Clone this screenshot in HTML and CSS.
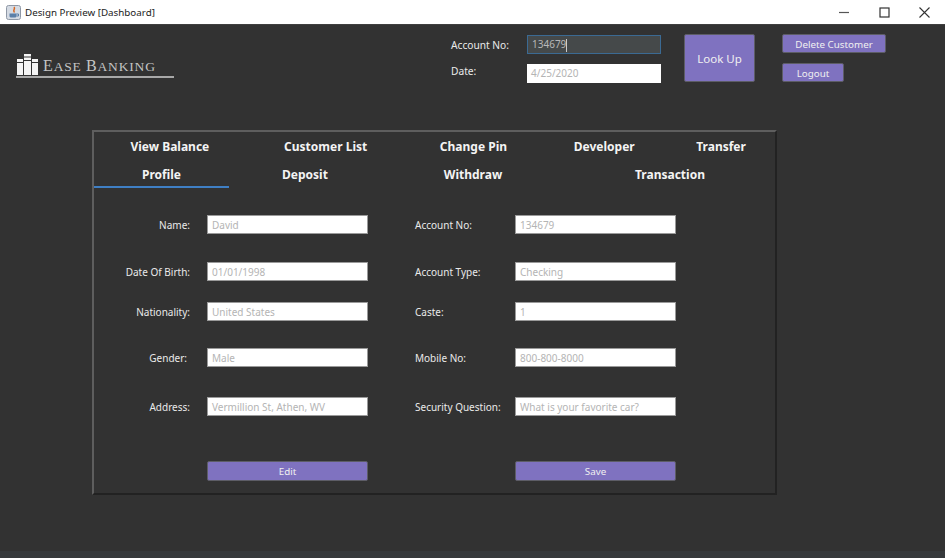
FILE: index.html
```html
<!DOCTYPE html>
<html lang="en">
<head>
  <meta charset="UTF-8" />
  <meta name="viewport" content="width=device-width, initial-scale=1.0"/>
  <title>Design Preview [Dashboard]</title>
  <link rel="stylesheet" href="styles.css">
</head>
<body>
<div class="titlebar">
  <svg class="app-icon" width="15" height="15" viewBox="0 0 15 15">
    <rect x="0.5" y="0.5" width="14" height="14" rx="2" fill="#d5dbe4" stroke="#8f98a6"/>
    <path d="M8 2 C10 4 6 5 8.500 7.500" fill="none" stroke="#d8651f" stroke-width="1.500"/>
    <path d="M3.500 8.500 H10.500 V11 C10.500 12 9.500 12.500 8.500 12.500 H5.500 C4.500 12.500 3.500 12 3.500 11 Z" fill="#5b7fa8"/>
    <path d="M10.500 9 H12.500 V11 H10.500" fill="none" stroke="#5b7fa8"/>
  </svg>
  <span class="window-title">Design Preview [Dashboard]</span>
  <div class="window-controls">
    <svg width="11" height="11" viewBox="0 0 11 11"><path d="M0 5.500 H10" stroke="#555" stroke-width="1.200"/></svg>
    <svg width="11" height="11" viewBox="0 0 11 11"><rect x="1" y="1" width="9" height="9" fill="none" stroke="#333" stroke-width="1.200"/></svg>
    <svg width="11" height="11" viewBox="0 0 11 11"><path d="M0.500 0.500 L10.500 10.500 M10.500 0.500 L0.500 10.500" stroke="#333" stroke-width="1.100"/></svg>
  </div>
</div>

<div class="app">
  <header class="topbar">
    <div class="logo">
      <svg class="logo-icon" width="22" height="21" viewBox="0 0 22 21">
        <path d="M1 5 H7 V21 H1 Z M8 0 H15 V21 H8 Z M16 5 H22 V21 H16 Z" fill="#f4f4f4"/>
        <path d="M1 8.500 H7 M8 3 H15 M8 6.500 H15 M16 8.500 H22" stroke="#333" stroke-width="1.200"/>
      </svg>
      <span class="logo-text"><span class="logo-cap">E</span>ASE <span class="logo-cap">B</span>ANKING</span>
    </div>

    <div class="lookup">
      <label class="top-label">Account No:</label>
      <div class="top-input focused">134679<span class="caret"></span></div>
      <label class="top-label date-label">Date:</label>
      <div class="top-input">4/25/2020</div>
    </div>

    <button class="btn btn-lookup">Look Up</button>

    <div class="side-actions">
      <button class="btn btn-delete">Delete Customer</button>
      <button class="btn btn-logout">Logout</button>
    </div>
  </header>

  <section class="panel">
    <div class="tab-row">
      <div class="tab t-balance">View Balance</div>
      <div class="tab t-list">Customer List</div>
      <div class="tab t-pin">Change Pin</div>
      <div class="tab t-dev">Developer</div>
      <div class="tab t-transfer">Transfer</div>
    </div>
    <div class="tab-row">
      <div class="tab t-profile active">Profile</div>
      <div class="tab t-deposit">Deposit</div>
      <div class="tab t-withdraw">Withdraw</div>
      <div class="tab t-transaction">Transaction</div>
    </div>

    <div class="form">
      <label class="lbl-left">Name:</label>
      <div class="field">David</div>
      <label class="lbl-right">Account No:</label>
      <div class="field">134679</div>

      <label class="lbl-left">Date Of Birth:</label>
      <div class="field">01/01/1998</div>
      <label class="lbl-right">Account Type:</label>
      <div class="field">Checking</div>

      <label class="lbl-left">Nationality:</label>
      <div class="field">United States</div>
      <label class="lbl-right">Caste:</label>
      <div class="field">1</div>

      <label class="lbl-left lbl-gender">Gender:</label>
      <div class="field">Male</div>
      <label class="lbl-right">Mobile No:</label>
      <div class="field">800-800-8000</div>

      <label class="lbl-left">Address:</label>
      <div class="field">Vermillion St, Athen, WV</div>
      <label class="lbl-right">Security Question:</label>
      <div class="field">What is your favorite car?</div>

      <span></span>
      <button class="btn btn-form">Edit</button>
      <span></span>
      <button class="btn btn-form">Save</button>
    </div>
  </section>
</div>
<div class="bottom-strip"></div>
</body>
</html>
```

FILE: styles.css
```css
* {
  box-sizing: border-box;
}
html, body {
  margin: 0;
  height: 100%;
  overflow: hidden;
}
body {
  font-family: "Noto Sans", "Open Sans", sans-serif;
  background-color: #323232;
  display: flex;
  flex-direction: column;
}

/* window chrome */
.titlebar {
  height: 25px;
  background-color: #fff;
  border-bottom: 1px solid #3f3f3f;
  display: flex;
  align-items: center;
  padding-left: 6px;
  flex-shrink: 0;
}
.app-icon {
  margin-right: 4px;
}
.window-title {
  font-size: 9.800px;
  color: #222;
}
.window-controls {
  margin-left: auto;
  display: flex;
  gap: 29px;
  padding-right: 15px;
}

.app {
  flex: 1;
  padding-left: 92px;
}
.bottom-strip {
  height: 7px;
  background-color: #36393b;
  flex-shrink: 0;
}

/* header */
.topbar {
  height: 105px;
  display: flex;
  align-items: flex-start;
}
.logo {
  margin-left: -76px;
  width: 158px;
  margin-top: 29px;
  height: 24px;
  border-bottom: 2px solid #a8a8a8;
  display: flex;
  align-items: flex-end;
  gap: 5px;
}
.logo-icon {
  flex-shrink: 0;
  margin-bottom: 1px;
}
.logo-text {
  font-family: "Liberation Serif", serif;
  font-size: 13.500px;
  line-height: 16px;
  color: #c4c4c4;
  letter-spacing: 0.850px;
  white-space: nowrap;
  margin-bottom: 1px;
}
.logo-cap {
  font-size: 16px;
}
.lookup {
  margin-left: 277px;
  margin-top: 10px;
  display: grid;
  grid-template-columns: 76px 134px;
  grid-template-rows: 19px 19px;
  row-gap: 10px;
  align-items: center;
}
.top-label {
  font-size: 10.200px;
  color: #eaeaea;
}
.date-label {
  padding-bottom: 6px;
}
.top-input {
  height: 19px;
  background-color: #fff;
  color: #b4b4b4;
  font-size: 10px;
  line-height: 18px;
  padding-left: 4px;
}
.top-input.focused {
  background-color: #45494a;
  border: 1px solid #3b6a93;
  color: #b8b8b8;
  line-height: 17px;
}
.caret {
  display: inline-block;
  width: 1px;
  height: 13px;
  background-color: #ccc;
  vertical-align: middle;
}
.btn {
  background-color: #7f72c0;
  color: #f0f0f0;
  border: 1px solid #5d5d66;
  border-radius: 2px;
  font-family: inherit;
  padding: 1px 0 0;
  font-size: 9.800px;
}
.btn-lookup {
  margin-left: 23px;
  margin-top: 9px;
  width: 71px;
  height: 48px;
  font-size: 11.500px;
}
.side-actions {
  margin-left: 27px;
  margin-top: 9px;
  display: flex;
  flex-direction: column;
  align-items: flex-start;
  gap: 10px;
}
.btn-delete {
  width: 104px;
  height: 19px;
}
.btn-logout {
  width: 62px;
  height: 19px;
}

/* main panel */
.panel {
  width: 685px;
  height: 365px;
  border: 2px solid;
  border-color: #5e5e5e #222 #222 #5e5e5e;
}
.tab-row {
  display: flex;
  height: 28px;
  padding-top: 5px;
}
.tab {
  text-align: center;
  font-size: 12px;
  font-weight: 700;
  line-height: 19px;
  color: #f4f4f4;
}
.t-balance { width: 152px; }
.t-list { width: 160px; }
.t-pin { width: 136px; }
.t-dev { width: 126px; }
.t-transfer { width: 108px; }
.t-profile { width: 135px; }
.t-deposit { width: 152px; }
.t-withdraw { width: 184px; }
.t-transaction { width: 210px; }
.tab.active {
  border-bottom: 2px solid #3f7fc4;
  height: 23px;
}

/* each row track holds the row plus the gap under it */
.form {
  margin-top: 27px;
  display: grid;
  grid-template-columns: 113px 161px 147px 161px;
  grid-template-rows: 47px 40px 46px 49px 64px 20px;
  align-items: start;
}
.lbl-left, .lbl-right {
  font-size: 10px;
  line-height: 21px;
  color: #eaeaea;
}
.lbl-left {
  text-align: right;
  padding-right: 17px;
}
.lbl-right {
  padding-left: 47px;
}
.lbl-gender {
  padding-right: 20px;
}
.field {
  height: 19px;
  background-color: #fff;
  border: 1px solid #9a9a9a;
  color: #b4b4b4;
  font-size: 10px;
  line-height: 19px;
  padding-left: 4px;
}
.btn-form {
  height: 20px;
  width: 161px;
}
```
